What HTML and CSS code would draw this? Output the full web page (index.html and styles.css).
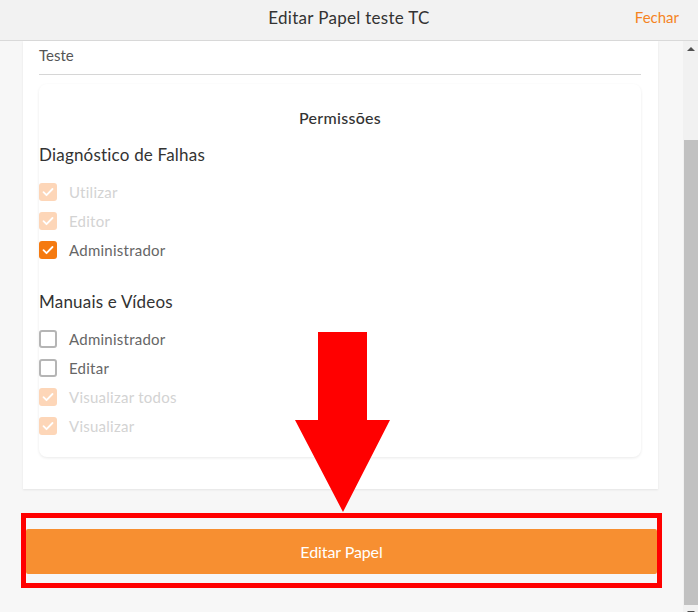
FILE: index.html
```html
<!DOCTYPE html>
<html lang="pt">
<head>
<meta charset="utf-8">
<title>Editar Papel teste TC</title>
<link rel="stylesheet" href="styles.css">
</head>
<body>
<header class="topbar">
  <div class="topbar-title">Editar Papel teste TC</div>
  <a class="topbar-close">Fechar</a>
</header>
<div class="viewport">
  <main class="content">
    <section class="card">
      <div class="field">Teste</div>
      <div class="perm-card">
        <h2 class="perm-title">Permissões</h2>
        <h3 class="group-title">Diagnóstico de Falhas</h3>
        <ul class="options">
          <li class="option disabled"><span class="box checked"><svg viewBox="0 0 18 18"><path d="M4.5 9.2l3 3 6-6.2"/></svg></span>Utilizar</li>
          <li class="option disabled"><span class="box checked"><svg viewBox="0 0 18 18"><path d="M4.5 9.2l3 3 6-6.2"/></svg></span>Editor</li>
          <li class="option"><span class="box checked"><svg viewBox="0 0 18 18"><path d="M4.5 9.2l3 3 6-6.2"/></svg></span>Administrador</li>
        </ul>
        <h3 class="group-title second">Manuais e Vídeos</h3>
        <ul class="options">
          <li class="option"><span class="box"></span>Administrador</li>
          <li class="option"><span class="box"></span>Editar</li>
          <li class="option disabled"><span class="box checked"><svg viewBox="0 0 18 18"><path d="M4.5 9.2l3 3 6-6.2"/></svg></span>Visualizar todos</li>
          <li class="option disabled"><span class="box checked"><svg viewBox="0 0 18 18"><path d="M4.5 9.2l3 3 6-6.2"/></svg></span>Visualizar</li>
        </ul>
      </div>
    </section>
    <div class="footer-mark">
      <button class="primary">Editar Papel</button>
    </div>
    <svg class="arrow" viewBox="0 0 96 181" width="96" height="181"><path d="M23 0H72V88H95L48 180L0 88H23Z"/></svg>
  </main>
  <aside class="scrollbar">
    <div class="sb-btn"><span class="tri-up"></span></div>
    <div class="sb-gap"></div>
    <div class="sb-thumb"></div>
    <div class="sb-btn"><span class="tri-down"></span></div>
  </aside>
</div>
</body>
</html>
```
FILE: styles.css
```css
* { box-sizing: border-box; }
html, body { margin: 0; padding: 0; }
body {
  width: 698px;
  height: 612px;
  overflow: hidden;
  background: #f7f7f7;
  font-family: Lato, "Noto Sans", "Liberation Sans", sans-serif;
  color: #333;
}
.topbar {
  height: 41px;
  padding-bottom: 5px;
  background: #f2f2f2;
  border-bottom: 1px solid #d9d9d9;
  display: flex;
  align-items: center;
  justify-content: center;
  position: relative;
}
.topbar-title {
  font-size: 17px;
  color: #333;
  letter-spacing: 0.3px;
}
.topbar-close {
  position: absolute;
  right: 19px;
  top: 8px;
  font-size: 15px;
  color: #f5841f;
}
.viewport {
  display: flex;
  height: 571px;
}
.content {
  width: 683px;
  padding: 0 25px 0 23px;
  position: relative;
}
.card {
  background: #fff;
  padding: 0 17px 32px 16px;
  box-shadow: 0 1px 2px rgba(0,0,0,0.08);
}
.field {
  padding: 3px 0 8px;
  line-height: 22px;
  font-size: 15px;
  color: #555;
  border-bottom: 1px solid #d6d6d6;
}
.perm-card {
  margin-top: 9px;
  border-radius: 8px;
  box-shadow: 0 1px 3px rgba(0,0,0,0.09);
  padding: 23px 0 17px;
}
.perm-title {
  margin: 0;
  text-align: center;
  font-size: 16px;
  line-height: 22px;
  font-weight: 500;
  color: #333;
  letter-spacing: 0.3px;
}
.group-title {
  margin: 15px 0 0;
  font-size: 17px;
  line-height: 22px;
  font-weight: 400;
  color: #333;
  letter-spacing: 0.2px;
}
.group-title.second { margin-top: 27px; }
.options {
  list-style: none;
  margin: 11px 0 0;
  padding: 0;
}
.option {
  height: 29px;
  display: flex;
  align-items: center;
  gap: 12px;
  font-size: 15px;
  letter-spacing: 0.25px;
  color: #666;
}
.box {
  width: 18px;
  height: 18px;
  border: 2px solid #b5b5b5;
  border-radius: 3px;
  flex: none;
  display: flex;
}
.box.checked {
  border: none;
  background: #f57a10;
}
.box svg { width: 18px; height: 18px; }
.box path { fill: none; stroke: #fff; stroke-width: 1.8; stroke-linecap: round; stroke-linejoin: round; }
.option.disabled { color: #d3d3d3; }
.option.disabled .box.checked { background: #fdd6b8; }
.footer-mark {
  margin: 24px -4px 0 -2px;
  border: 5px solid #ff0000;
  padding: 11px 0 9px;
  background: #f6f7f8;
}
.primary {
  display: block;
  width: 100%;
  height: 45px;
  border: none;
  border-radius: 2px;
  background: #f78f31;
  color: #fff;
  font-family: inherit;
  font-size: 16px;
  letter-spacing: -0.1px;
}
.arrow {
  position: absolute;
  left: 295px;
  top: 291px;
}
.arrow path { fill: #ff0000; }
.scrollbar {
  width: 15px;
  background: #f1f1f1;
  display: flex;
  flex-direction: column;
  align-items: center;
}
.sb-btn {
  height: 15px;
  flex: none;
  width: 15px;
  display: flex;
  align-items: center;
  justify-content: center;
}
.tri-up {
  width: 0; height: 0;
  border-left: 4px solid transparent;
  border-right: 4px solid transparent;
  border-bottom: 4px solid #505050;
}
.tri-down {
  width: 0; height: 0;
  border-left: 4px solid transparent;
  border-right: 4px solid transparent;
  border-top: 4px solid #505050;
}
.sb-gap { height: 84px; flex: none; }
.sb-thumb {
  height: 465px;
  width: 14px;
  margin-left: 1px;
  background: #c1c1c1;
  flex: none;
}
```
